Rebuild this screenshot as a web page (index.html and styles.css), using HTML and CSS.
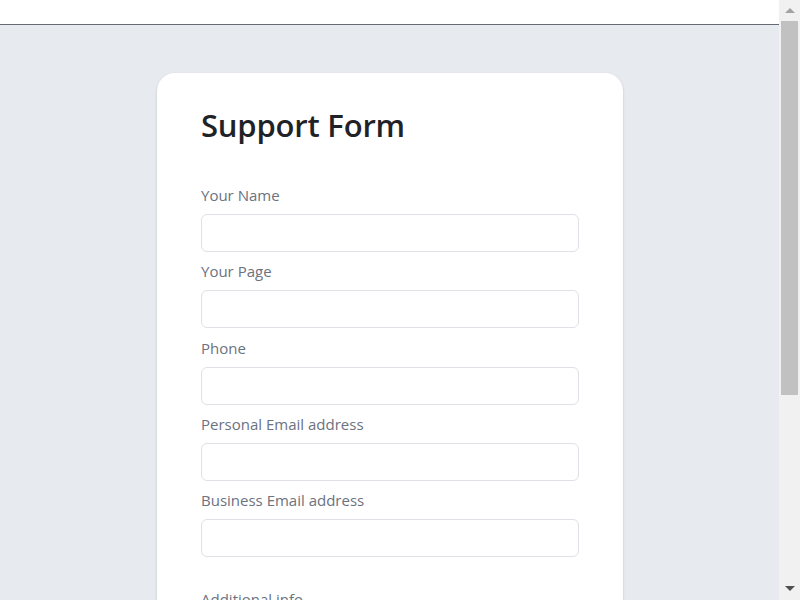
FILE: index.html
```html
<!DOCTYPE html>
<html lang="en">
<head>
<meta charset="utf-8">
<title>Support Form</title>
<link rel="stylesheet" href="styles.css">
</head>
<body>
<header class="topbar"></header>
<main class="page">
  <form class="card">
    <h1 class="title">Support Form</h1>
    <div class="field">
      <label class="label" for="name">Your Name</label>
      <input class="input" id="name" type="text">
    </div>
    <div class="field">
      <label class="label" for="page">Your Page</label>
      <input class="input" id="page" type="text">
    </div>
    <div class="field">
      <label class="label" for="phone">Phone</label>
      <input class="input" id="phone" type="text">
    </div>
    <div class="field">
      <label class="label" for="pemail">Personal Email address</label>
      <input class="input" id="pemail" type="email">
    </div>
    <div class="field">
      <label class="label" for="bemail">Business Email address</label>
      <input class="input" id="bemail" type="email">
    </div>
    <div class="field field-extra">
      <label class="label" for="info">Additional info</label>
      <textarea class="input textarea" id="info"></textarea>
    </div>
    <button class="submit" type="button">Submit</button>
  </form>
</main>
<div class="scrollbar" aria-hidden="true">
  <span class="arrow arrow-up"></span>
  <span class="thumb"></span>
  <span class="arrow arrow-down"></span>
</div>
</body>
</html>
```
FILE: styles.css
```css
* { box-sizing: border-box; }
html, body { margin: 0; padding: 0; }
body {
  background: #e7eaee;
  font-family: "Open Sans", "Noto Sans", sans-serif;
  color: #1f2328;
  padding-right: 20px;
}
.topbar {
  height: 25px;
  background: #ffffff;
  border-bottom: 1px solid #646b75;
}
.page {
  display: flex;
  justify-content: center;
  padding: 48px 0 48px;
}
.card {
  width: 466px;
  background: #ffffff;
  border-radius: 18px;
  padding: 33px 44px 44px;
  box-shadow: 0 1px 3px rgba(0,0,0,0.12), 0 1px 2px rgba(0,0,0,0.06);
  display: flex;
  flex-direction: column;
}
.title {
  margin: 0 0 40px;
  font-size: 31px;
  font-weight: 600;
  letter-spacing: -0.2px;
  line-height: 38px;
  color: #1f2328;
}
.field {
  display: flex;
  flex-direction: column;
  margin-bottom: 8.25px;
}
.field-extra { margin-top: 23px; }
.label {
  font-size: 15px;
  line-height: 22.5px;
  color: #6b7280;
  margin-bottom: 7.5px;
}
.input {
  height: 38px;
  border: 1px solid #dfe1e6;
  border-radius: 6px;
  background: #fff;
  font: inherit;
  padding: 6px 12px;
}
.textarea {
  height: 120px;
  resize: vertical;
}
.submit {
  margin-top: 16px;
  align-self: flex-start;
  height: 40px;
  padding: 0 20px;
  border: none;
  border-radius: 6px;
  background: #2563eb;
  color: #fff;
  font: inherit;
  font-size: 15px;
}
.scrollbar {
  position: fixed;
  top: 0;
  right: 0;
  width: 21px;
  height: 100vh;
  background: #f1f1f1;
  display: flex;
  flex-direction: column;
  align-items: center;
}
.arrow {
  width: 0;
  height: 0;
  border-left: 5px solid transparent;
  border-right: 5px solid transparent;
}
.arrow-up {
  margin-top: 8px;
  border-bottom: 5px solid #a3a3a3;
}
.arrow-down {
  margin-top: 191px;
  border-top: 5px solid #505050;
}
.thumb {
  margin-top: 8px;
  width: 17px;
  height: 374px;
  background: #c1c1c1;
}
```
